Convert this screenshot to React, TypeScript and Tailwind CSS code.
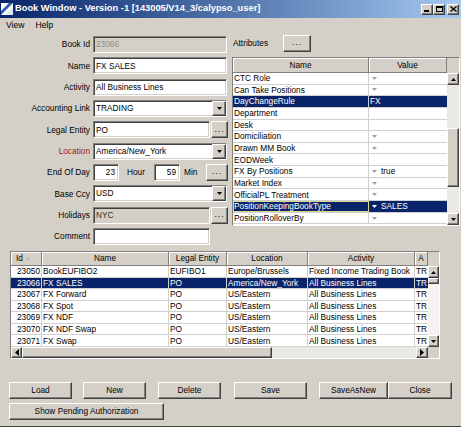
import React from 'react';

// classic look borders
const SUNKEN =
  'border border-t-[#808080] border-l-[#808080] border-b-white border-r-white shadow-[inset_1px_1px_0_#404040,inset_-1px_-1px_0_#d4d0c8]';
const RAISED =
  'bg-[#d4d0c8] border border-t-white border-l-white border-b-[#404040] border-r-[#404040] shadow-[inset_-1px_-1px_0_#808080,inset_1px_1px_0_#d4d0c8]';
const HEAD =
  'bg-[#d4d0c8] border-r border-b border-r-[#808080] border-b-[#808080] shadow-[inset_1px_1px_0_#ffffff]';

const Tri = ({ up = false, color = '#000', w = 7, h = 4 }: { up?: boolean; color?: string; w?: number; h?: number }) => (
  <svg width={w} height={h} viewBox="0 0 7 4" className="shrink-0">
    <polygon points={up ? '0,4 3.5,0 7,4' : '0,0 7,0 3.5,4'} fill={color} />
  </svg>
);

const TriSide = ({ left = false }: { left?: boolean }) => (
  <svg width={4} height={7} viewBox="0 0 4 7" className="shrink-0">
    <polygon points={left ? '4,0 0,3.5 4,7' : '0,0 4,3.5 0,7'} fill="#000" />
  </svg>
);

const Dots = () => <span className="tracking-[1px] -mt-[2px]">...</span>;

const Label = ({ children, red = false }: { children: React.ReactNode; red?: boolean }) => (
  <div className={`w-[93px] shrink-0 pr-[3px] text-right ${red ? 'text-[#9b2020]' : ''}`}>{children}</div>
);

const Combo = ({ value }: { value: string }) => (
  <div className={`${SUNKEN} bg-white h-[17px] w-[134px] flex items-center`}>
    <span className="flex-1 pl-[2px] leading-[11px] whitespace-nowrap overflow-hidden">{value}</span>
    <div className={`${RAISED} w-[14px] h-full flex items-center justify-center`}>
      <Tri w={5} h={3} />
    </div>
  </div>
);

const attrs = [
  { n: 'CTC Role', a: true },
  { n: 'Can Take Positions', a: true },
  { n: 'DayChangeRule', v: 'FX', sel: true },
  { n: 'Department' },
  { n: 'Desk' },
  { n: 'Domiciliation', a: true },
  { n: 'Drawn MM Book', a: true },
  { n: 'EODWeek' },
  { n: 'FX By Positions', a: true, v: 'true' },
  { n: 'Market Index', a: true },
  { n: 'OfficialPL Treatment', a: true },
  { n: 'PositionKeepingBookType', a: true, v: 'SALES', sel: true, focus: true },
  { n: 'PositionRolloverBy', a: true },
];

const books = [
  ['23050', 'BookEUFIBO2', 'EUFIBO1', 'Europe/Brussels', 'Fixed Income Trading Book'],
  ['23066', 'FX SALES', 'PO', 'America/New_York', 'All Business Lines'],
  ['23067', 'FX Forward', 'PO', 'US/Eastern', 'All Business Lines'],
  ['23068', 'FX Spot', 'PO', 'US/Eastern', 'All Business Lines'],
  ['23069', 'FX NDF', 'PO', 'US/Eastern', 'All Business Lines'],
  ['23070', 'FX NDF Swap', 'PO', 'US/Eastern', 'All Business Lines'],
  ['23071', 'FX Swap', 'PO', 'US/Eastern', 'All Business Lines'],
];

const App = () => {
  return (
    <div className="w-[461px] h-[427px] bg-[#d4d0c8] overflow-hidden flex flex-col font-['Liberation_Sans',Arial,sans-serif] text-[8.3px] leading-none text-black border-b border-b-[#404040]">
      {/* title bar */}
      <div className="h-[18px] shrink-0 flex items-center bg-linear-to-r from-[#0a246a] to-[#a6caf0]">
        <svg width="12" height="12" viewBox="0 0 12 12" className="ml-[1px] shrink-0">
          <rect x="0" y="0" width="12" height="12" fill="#ffffff" />
          <polygon points="0,12 0,8 8,0 12,0" fill="#2a5aa8" />
          <polygon points="4,12 12,4 12,12" fill="#dfe8f5" />
        </svg>
        <span className="ml-[2px] text-white font-bold text-[9.3px] whitespace-nowrap">
          Book Window - Version -1 [143005/V14_3/calypso_user]
        </span>
        <div className="ml-auto mr-[2px] flex items-center">
          <div className={`${RAISED} w-[12px] h-[11px] flex items-end justify-center pb-[2px]`}>
            <div className="w-[5px] h-[2px] bg-black -ml-[2px]" />
          </div>
          <div className={`${RAISED} w-[12px] h-[11px] flex items-center justify-center`}>
            <div className="w-[7px] h-[6px] border border-black border-t-2" />
          </div>
          <div className={`${RAISED} ml-[2px] w-[12px] h-[11px] flex items-center justify-center`}>
            <svg width="7" height="6" viewBox="0 0 7 6">
              <path d="M0.5 0.5 L6.5 5.5 M6.5 0.5 L0.5 5.5" stroke="#000" strokeWidth="1.4" />
            </svg>
          </div>
        </div>
      </div>

      {/* menu */}
      <div className="h-[14px] shrink-0 flex items-center text-[8.6px]">
        <span className="ml-[6px]">View</span>
        <span className="ml-[11px]">Help</span>
      </div>

      {/* top section */}
      <div className="h-[219px] shrink-0 flex">
        {/* left form */}
        <div className="w-[230px] shrink-0 pt-[4px] flex flex-col gap-[4.33px]">
          <div className="flex items-center h-[17px]">
            <Label>Book Id</Label>
            <div className={`${SUNKEN} bg-[#d4d0c8] h-[17px] w-[134px] flex items-center pl-[2px] text-[#8a8a8a]`}>23066</div>
          </div>
          <div className="flex items-center h-[17px]">
            <Label>Name</Label>
            <div className={`${SUNKEN} bg-white h-[17px] w-[134px] flex items-center pl-[2px]`}>FX SALES</div>
          </div>
          <div className="flex items-center h-[17px]">
            <Label>Activity</Label>
            <div className={`${SUNKEN} bg-white h-[17px] w-[134px] flex items-center pl-[2px]`}>All Business Lines</div>
          </div>
          <div className="flex items-center h-[17px]">
            <Label>Accounting Link</Label>
            <Combo value="TRADING" />
          </div>
          <div className="flex items-center h-[17px]">
            <Label>Legal Entity</Label>
            <div className={`${SUNKEN} bg-white h-[17px] w-[117px] flex items-center pl-[2px]`}>PO</div>
            <div className={`${RAISED} ml-[1px] w-[17px] h-[17px] flex items-center justify-center`}>
              <Dots />
            </div>
          </div>
          <div className="flex items-center h-[17px]">
            <Label red>Location</Label>
            <Combo value="America/New_York" />
          </div>
          <div className="flex items-center h-[17px]">
            <Label>End Of Day</Label>
            <div className={`${SUNKEN} bg-white h-[17px] w-[26px] flex items-center justify-end pr-[3px]`}>23</div>
            <span className="w-[35px] pl-[8px]">Hour</span>
            <div className={`${SUNKEN} bg-white h-[17px] w-[26px] flex items-center justify-end pr-[3px]`}>59</div>
            <span className="w-[26px] pl-[4px]">Min</span>
            <div className={`${RAISED} w-[22px] h-[17px] flex items-center justify-center`}>
              <Dots />
            </div>
          </div>
          <div className="flex items-center h-[17px]">
            <Label>Base Ccy</Label>
            <Combo value="USD" />
          </div>
          <div className="flex items-center h-[17px]">
            <Label>Holidays</Label>
            <div className={`${SUNKEN} bg-[#d4d0c8] h-[17px] w-[117px] flex items-center pl-[2px] text-[#303030]`}>NYC</div>
            <div className={`${RAISED} ml-[1px] w-[17px] h-[17px] flex items-center justify-center`}>
              <Dots />
            </div>
          </div>
          <div className="flex items-center h-[17px]">
            <Label>Comment</Label>
            <div className={`${SUNKEN} bg-white h-[17px] w-[117px]`} />
          </div>
        </div>

        {/* right: attributes */}
        <div className="flex-1 flex flex-col">
          <div className="mt-[3px] h-[17px] flex items-center">
            <span className="w-[53px] pl-[3px]">Attributes</span>
            <div className={`${RAISED} w-[28px] h-[17px] flex items-center justify-center`}>
              <Dots />
            </div>
          </div>
          <div className="mt-[5px] ml-[2px] w-[228px] h-[169px] border border-t-[#808080] border-l-[#808080] border-b-white border-r-white flex">
            <div className="w-[214px] flex flex-col bg-white">
              <div className="h-[15px] flex shrink-0">
                <div className={`${HEAD} w-[136px] flex items-center justify-center`}>Name</div>
                <div className={`${HEAD} w-[78px] flex items-center justify-center`}>Value</div>
              </div>
              {attrs.map((r) => (
                <div key={r.n} className="h-[11.65px] flex border-b border-b-[#d0d0d0]">
                  <div
                    className={`w-[136px] flex items-center pl-[1px] whitespace-nowrap overflow-hidden border-r border-r-[#d0d0d0] ${
                      r.sel ? 'bg-[#0a246a] text-white' : ''
                    } ${r.focus ? 'outline outline-1 -outline-offset-1 outline-[#d8d890]' : ''}`}
                  >
                    {r.n}
                  </div>
                  <div className={`w-[78px] flex items-center whitespace-nowrap overflow-hidden ${r.sel ? 'bg-[#0a246a] text-white' : ''}`}>
                    {r.a ? (
                      <>
                        <span className="ml-[3px]">
                          <Tri w={5} h={3} color={r.sel ? '#ffffff' : '#a0a0a0'} />
                        </span>
                        {r.v && <span className="ml-[4px]">{r.v}</span>}
                      </>
                    ) : (
                      r.v && <span className="pl-[1px]">{r.v}</span>
                    )}
                  </div>
                </div>
              ))}
            </div>
            {/* vertical scrollbar */}
            <div className="w-[12px] flex flex-col">
              <div className="h-[15px] bg-[#d4d0c8] shrink-0" />
              <div className={`${RAISED} h-[12px] shrink-0 flex items-center justify-center`}>
                <Tri up w={5} h={3} />
              </div>
              <div className="flex-1 bg-[#ebe9e4] flex flex-col">
                <div className="h-[43px]" />
                <div className={`${RAISED} h-[59px]`} />
              </div>
              <div className={`${RAISED} h-[12px] shrink-0 flex items-center justify-center`}>
                <Tri w={5} h={3} />
              </div>
            </div>
          </div>
        </div>
      </div>

      {/* books table */}
      <div className="ml-[10px] w-[430px] h-[108px] shrink-0 border border-t-[#808080] border-l-[#808080] border-b-white border-r-white flex flex-col">
        <div className="h-[14px] flex shrink-0">
          <div className={`${HEAD} w-[31px] flex items-center pl-[5px]`}>
            Id<span className="ml-[3px]"><Tri up w={4} h={3} color="#b0b0b0" /></span>
          </div>
          <div className={`${HEAD} w-[127px] flex items-center justify-center`}>Name</div>
          <div className={`${HEAD} w-[58px] flex items-center justify-center`}>Legal Entity</div>
          <div className={`${HEAD} w-[81px] flex items-center justify-center`}>Location</div>
          <div className={`${HEAD} w-[107px] flex items-center justify-center`}>Activity</div>
          <div className={`${HEAD} w-[13px] flex items-center justify-center overflow-hidden`}>A</div>
          <div className="w-[11px] bg-[#d4d0c8]" />
        </div>
        <div className="h-[81px] flex shrink-0">
          <div className="w-[417px] flex flex-col bg-white">
            {books.map((b, i) => {
              const sel = i === 1;
              return (
                <div
                  key={b[0]}
                  className={`h-[11.57px] flex border-b border-b-[#d0d0d0] whitespace-nowrap ${sel ? 'bg-[#0a246a] text-white' : ''}`}
                >
                  <div className="w-[31px] flex items-center justify-end pr-[1px] border-r border-r-[#d0d0d0]">{b[0]}</div>
                  <div className="w-[127px] flex items-center pl-[1px] overflow-hidden border-r border-r-[#d0d0d0]">{b[1]}</div>
                  <div className="w-[58px] flex items-center pl-[1px] overflow-hidden border-r border-r-[#d0d0d0]">{b[2]}</div>
                  <div className="w-[81px] flex items-center pl-[1px] overflow-hidden border-r border-r-[#d0d0d0]">{b[3]}</div>
                  <div className="w-[107px] flex items-center pl-[1px] overflow-hidden border-r border-r-[#d0d0d0]">{b[4]}</div>
                  <div className="w-[13px] flex items-center pl-[1px] overflow-hidden">TR</div>
                </div>
              );
            })}
          </div>
          <div className="w-[11px] flex flex-col">
            <div className={`${RAISED} h-[12px] shrink-0 flex items-center justify-center`}>
              <Tri up w={5} h={3} />
            </div>
            <div className="flex-1 bg-[#f4f3f0] flex flex-col">
              <div className={`${RAISED} h-[6px]`} />
            </div>
            <div className={`${RAISED} h-[12px] shrink-0 flex items-center justify-center`}>
              <Tri w={5} h={3} />
            </div>
          </div>
        </div>
        <div className="h-[11px] flex shrink-0">
          <div className={`${RAISED} w-[11px] flex items-center justify-center`}>
            <TriSide left />
          </div>
          <div className={`${RAISED} w-[250px]`} />
          <div className="flex-1 bg-[#ebe9e4]" />
          <div className={`${RAISED} w-[12px] flex items-center justify-center`}>
            <TriSide />
          </div>
          <div className="w-[11px] bg-[#d4d0c8]" />
        </div>
      </div>

      {/* buttons */}
      <div className="mt-[23px] pl-[9px] flex">
        <button className={`${RAISED} w-[63px] h-[17px]`}>Load</button>
        <button className={`${RAISED} ml-[11px] w-[63px] h-[17px]`}>New</button>
        <button className={`${RAISED} ml-[12px] w-[63px] h-[17px]`}>Delete</button>
        <button className={`${RAISED} ml-[13px] w-[73px] h-[17px]`}>Save</button>
        <button className={`${RAISED} ml-[12px] w-[69px] h-[17px]`}>SaveAsNew</button>
        <button className={`${RAISED} w-[64px] h-[17px]`}>Close</button>
      </div>
      <div className="mt-[4px] pl-[9px] flex">
        <button className={`${RAISED} w-[155px] h-[17px]`}>Show Pending Authorization</button>
      </div>
    </div>
  );
};

export default App;
